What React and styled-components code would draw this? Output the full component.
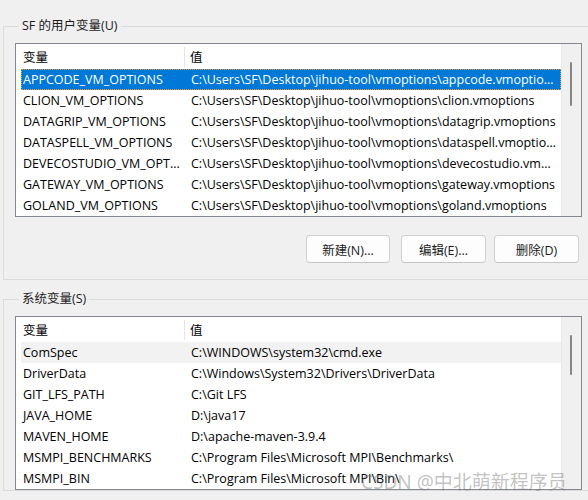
import React from 'react'
import styled, { createGlobalStyle } from 'styled-components'

const GlobalStyle = createGlobalStyle`
	html, body {
		margin: 0;
		padding: 0;
		background: #f0f0f0;
		height: 500px;
		overflow: hidden;
	}
	body {
		font-family: "Open Sans", "Noto Sans CJK SC", sans-serif;
		font-size: 12.5px;
		color: #000;
	}
`

const Page = styled.div`
	position: relative;
	display: flex;
	flex-direction: column;
	gap: 10px;
	padding-top: 17px;
	width: 588px;
	height: 500px;
	box-sizing: border-box;
`

const Group = styled.fieldset`
	margin: 0 -20px 0 3px;
	padding: 0 0 ${(p) => p.$bottom || 0}px 11px;
	border: 1px solid #dcdcdc;
	min-width: 0;
	display: flex;
	flex-direction: column;
`

const Legend = styled.legend`
	margin-left: 4px;
	padding: 0 3px 0 3px;
	line-height: 18px;
	color: #1a1a1a;
`

const List = styled.div`
	margin-top: 8px;
	width: 567px;
	height: 174px;
	box-sizing: border-box;
	border: 1px solid #828790;
	background: #fff;
	display: flex;
	overflow: hidden;
`

const Content = styled.div`
	flex: 1;
	padding-left: 5px;
	overflow: hidden;
`

const Scrollbar = styled.div`
	width: 18px;
	background: #f0f0f0;
	border-left: 1px solid #e8e8e8;
	display: flex;
	justify-content: center;
	padding-right: 1px;
`

const Thumb = styled.div`
	width: 2px;
	margin-top: 18px;
	height: ${(p) => p.$h}px;
	background: #858585;
	border-radius: 1px;
`

const Header = styled.div`
	display: grid;
	grid-template-columns: 164px 1fr;
	height: 25px;
	align-items: center;
`

const HeadCell = styled.div`
	height: 20px;
	line-height: 22px;
	padding-left: ${(p) => (p.$first ? 2 : 5)}px;
	border-right: ${(p) => (p.$first ? '1px solid #e5e5e5' : 'none')};
`

const Row = styled.div`
	display: grid;
	grid-template-columns: 164px 1fr;
	height: 21px;
	box-sizing: border-box;
	padding-top: 1px;
	line-height: 20px;
	background: ${(p) => (p.$selected ? '#0078d7' : p.$hover ? '#f2f2f2' : 'transparent')};
	color: ${(p) => (p.$selected ? '#fff' : '#000')};
	outline: ${(p) => (p.$selected ? '1px dotted #f0a040' : 'none')};
	outline-offset: -1px;
`

const Cell = styled.div`
	padding: 0 4px 0 ${(p) => (p.$first ? 2 : 6)}px;
	white-space: nowrap;
	overflow: hidden;
	text-overflow: ellipsis;
`

const Buttons = styled.div`
	display: flex;
	justify-content: flex-end;
	margin-top: 18px;
	width: 564px;
`

const Button = styled.button`
	width: ${(p) => p.$w}px;
	margin-left: ${(p) => p.$ml || 0}px;
	height: 28px;
	font: inherit;
	color: #1a1a1a;
	background: #fdfdfd;
	border: 1px solid #d0d0d0;
	border-bottom-color: #c4c4c4;
	border-radius: 4px;
	padding: 0;
`

const Watermark = styled.div`
	position: absolute;
	left: 361px;
	top: 467px;
	font-family: "Noto Sans", "Noto Sans CJK SC", sans-serif;
	font-size: 19px;
	color: rgba(120, 120, 120, 0.45);
	pointer-events: none;
	white-space: nowrap;
`

const base = 'C:\\Users\\SF\\Desktop\\jihuo-tool\\vmoptions\\'

const userVars = [
	['APPCODE_VM_OPTIONS', base + 'appcode.vmoptions'],
	['CLION_VM_OPTIONS', base + 'clion.vmoptions'],
	['DATAGRIP_VM_OPTIONS', base + 'datagrip.vmoptions'],
	['DATASPELL_VM_OPTIONS', base + 'dataspell.vmoptions'],
	['DEVECOSTUDIO_VM_OPTIONS', base + 'devecostudio.vmoptions'],
	['GATEWAY_VM_OPTIONS', base + 'gateway.vmoptions'],
	['GOLAND_VM_OPTIONS', base + 'goland.vmoptions'],
	['IDEA_VM_OPTIONS', base + 'idea.vmoptions'],
]

const sysVars = [
	['ComSpec', 'C:\\WINDOWS\\system32\\cmd.exe'],
	['DriverData', 'C:\\Windows\\System32\\Drivers\\DriverData'],
	['GIT_LFS_PATH', 'C:\\Git LFS'],
	['JAVA_HOME', 'D:\\java17'],
	['MAVEN_HOME', 'D:\\apache-maven-3.9.4'],
	['MSMPI_BENCHMARKS', 'C:\\Program Files\\Microsoft MPI\\Benchmarks\\'],
	['MSMPI_BIN', 'C:\\Program Files\\Microsoft MPI\\Bin\\'],
	['NUMBER_OF_PROCESSORS', '16'],
]

const VarList = ({ rows, selected, hover, thumb }) => (
	<List>
		<Content>
			<Header>
				<HeadCell $first>变量</HeadCell>
				<HeadCell>值</HeadCell>
			</Header>
			{rows.map(([name, value], i) => (
				<Row key={name} $selected={i === selected} $hover={i === hover}>
					<Cell $first>{name}</Cell>
					<Cell>{value}</Cell>
				</Row>
			))}
		</Content>
		<Scrollbar>
			<Thumb $h={thumb} />
		</Scrollbar>
	</List>
)

const App = () => (
	<>
		<GlobalStyle />
		<Page>
			<Group $bottom={16}>
				<Legend>SF 的用户变量(U)</Legend>
				<VarList rows={userVars} selected={0} thumb={44} />
				<Buttons>
					<Button $w={84}>新建(N)...</Button>
					<Button $w={85} $ml={11}>编辑(E)...</Button>
					<Button $w={85} $ml={8}>删除(D)</Button>
				</Buttons>
			</Group>
			<Group>
				<Legend>系统变量(S)</Legend>
				<VarList rows={sysVars} hover={0} thumb={40} />
			</Group>
			<Watermark>CSDN @中北萌新程序员</Watermark>
		</Page>
	</>
)

export default App
